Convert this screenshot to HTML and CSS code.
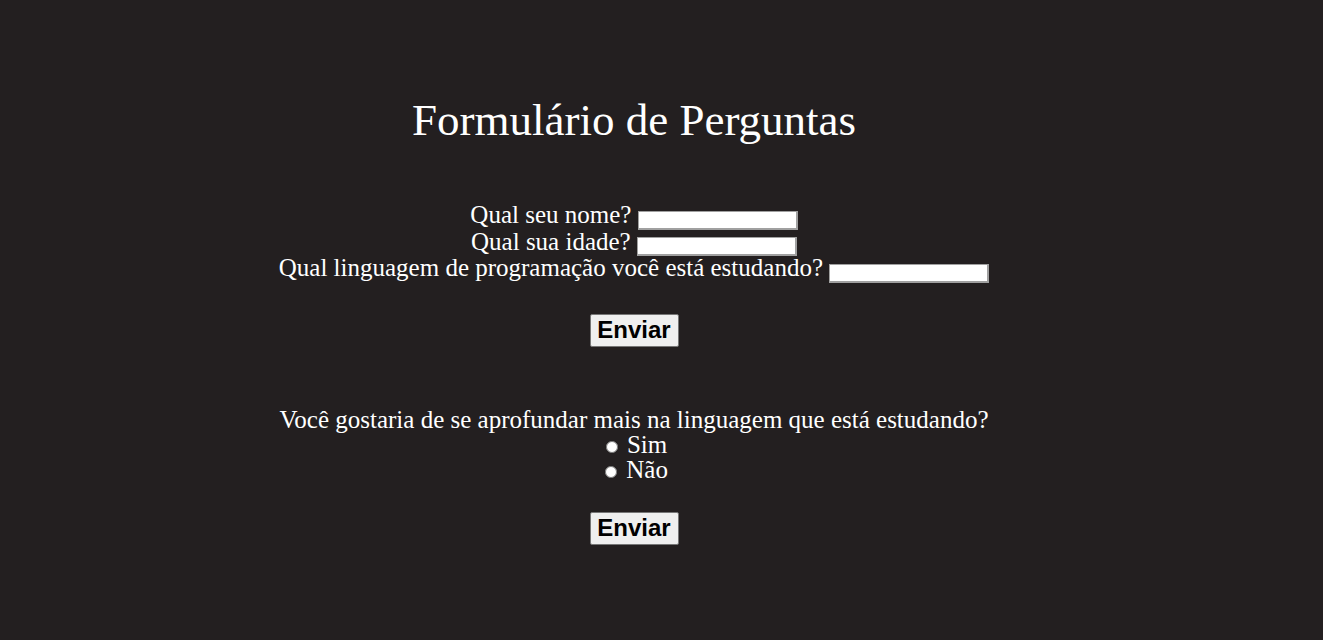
FILE: index.html
```html
<!DOCTYPE html>
<html lang="pt-BR">
<head>
<meta charset="utf-8">
<title>Formulário de Perguntas</title>
<link rel="stylesheet" href="styles.css">
</head>
<body>
<main class="page">
  <h1 class="title">Formulário de Perguntas</h1>
  <form class="form form-first">
    <div class="row"><label>Qual seu nome? <input type="text" class="field"></label></div>
    <div class="row"><label>Qual sua idade? <input type="text" class="field"></label></div>
    <div class="row"><label>Qual linguagem de programação você está estudando? <input type="text" class="field"></label></div>
    <button type="button" class="btn">Enviar</button>
  </form>
  <form class="form form-second">
    <div class="row row-q">Você gostaria de se aprofundar mais na linguagem que está estudando?</div>
    <div class="row row-q"><label><input type="radio" name="q" class="radio"> Sim</label></div>
    <div class="row row-q"><label><input type="radio" name="q" class="radio"> Não</label></div>
    <button type="button" class="btn">Enviar</button>
  </form>
</main>
</body>
</html>
```
FILE: styles.css
```css
html, body {
  margin: 0;
  padding: 0;
  background: #231f20;
}
body {
  color: #ffffff;
  font-family: "Liberation Serif", "Times New Roman", serif;
}
.page {
  width: 1268px;
  text-align: center;
  padding-top: 92px;
}
.title {
  font-size: 45px;
  font-weight: normal;
  margin: 0;
  height: 110px;
  line-height: 56px;
}
.form {
  font-size: 25px;
  display: flex;
  flex-direction: column;
  align-items: center;
}
.row {
  height: 26.5px;
  line-height: 26.5px;
  white-space: nowrap;
}
.row-q {
  height: 25px;
  line-height: 25px;
}
.field {
  width: 153px;
  height: 14px;
  border-style: solid;
  border-color: #a0a0a0;
  border-width: 1px 2px 2px 1px;
  background: #fff;
  padding: 1px 2px;
  margin: 0;
  vertical-align: -1px;
  box-sizing: content-box;
  font-size: 13px;
}
.btn {
  margin-top: 32px;
  font-family: "Liberation Sans", Arial, sans-serif;
  font-weight: bold;
  font-size: 24px;
  width: 89px;
  height: 33px;
  padding: 0;
  background: #efefef;
  border: 1px solid #767676;
  border-radius: 2px;
  color: #000;
  line-height: 30px;
}
.form-second {
  margin-top: 60px;
}
.form-second .btn {
  margin-top: 30px;
}
.radio {
  width: 12px;
  height: 12px;
  margin: 0 3px 0 5px;
  vertical-align: 0;
}
```
